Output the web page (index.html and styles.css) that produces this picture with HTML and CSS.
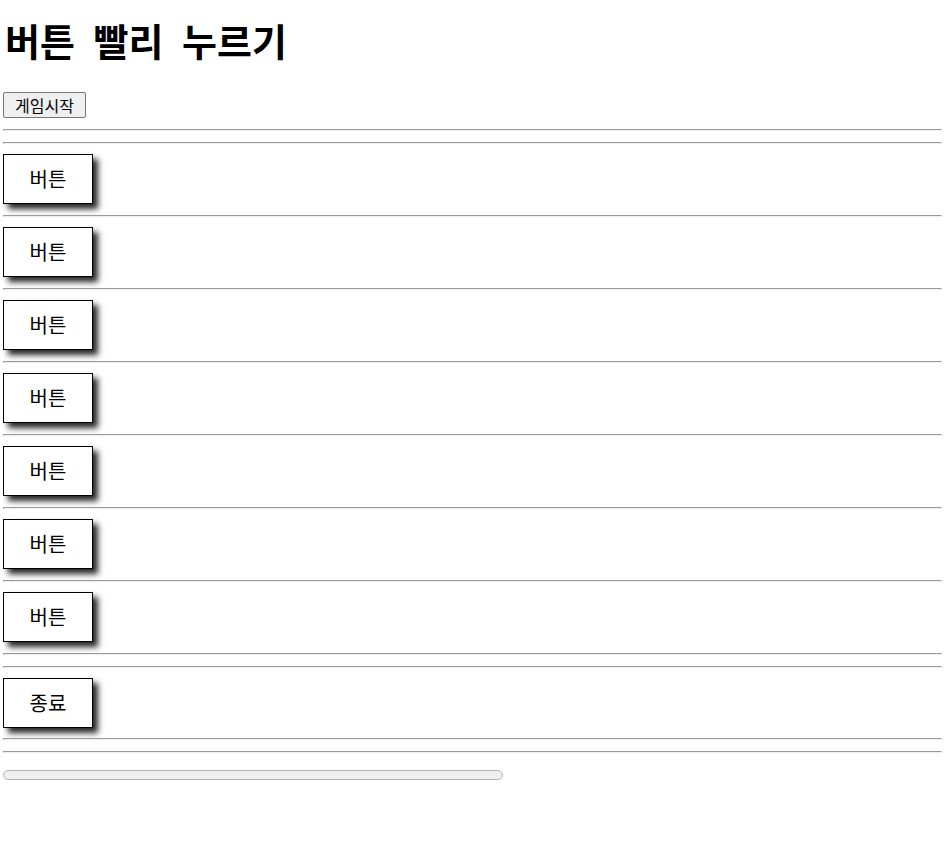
FILE: index.html
```html
<!DOCTYPE html>
<html lang="ko">
<head>
<meta charset="utf-8">
<title>버튼 빨리 누르기</title>
<link rel="stylesheet" href="styles.css">
</head>
<body>
<h1 class="title">버튼 빨리 누르기</h1>
<div class="start-row"><button class="start-btn">게임시작</button></div>
<hr class="line">
<hr class="line">
<div class="box">버튼</div>
<hr class="line">
<div class="box">버튼</div>
<hr class="line">
<div class="box">버튼</div>
<hr class="line">
<div class="box">버튼</div>
<hr class="line">
<div class="box">버튼</div>
<hr class="line">
<div class="box">버튼</div>
<hr class="line">
<div class="box">버튼</div>
<hr class="line">
<hr class="line">
<div class="box">종료</div>
<hr class="line line-tight">
<hr class="line">
<div class="progress"></div>
</body>
</html>
```

FILE: styles.css
```css
html, body {
  background: #ffffff;
}
body {
  margin: 0 5px 0 3px;
  font-family: "Noto Sans CJK KR", "Noto Sans", sans-serif;
  color: #000;
}
.title {
  font-size: 38px;
  font-weight: 700;
  line-height: 44px;
  word-spacing: 8px;
  margin: 18px 0 30px 2px;
}
.start-row {
  display: block;
}
.start-btn {
  display: block;
  box-sizing: border-box;
  height: 26px;
  width: 83px;
  padding: 0;
  font-family: "Noto Sans CJK KR", sans-serif;
  font-size: 16px;
  line-height: 24px;
  color: #000;
  background: #efefef;
  border: 1px solid #767676;
  border-radius: 2px;
}
.line {
  height: 0;
  margin: 11px 0 10px 0;
  border-style: solid;
  border-width: 1px;
  border-color: #9a9a9a #eeeeee #eeeeee #9a9a9a;
}
.line-tight {
  margin-top: 10px;
}
.box {
  box-sizing: border-box;
  width: 90px;
  height: 50px;
  padding-bottom: 2px;
  border: 1px solid #000;
  box-shadow: 5px 5px 6px rgba(0, 0, 0, 0.85);
  display: flex;
  align-items: center;
  justify-content: center;
  font-size: 20px;
  background: #fff;
}
.progress {
  box-sizing: border-box;
  width: 500px;
  height: 10px;
  margin-top: 17px;
  background: #efefef;
  border: 1px solid #b2b2b2;
  border-radius: 5px;
}
```
